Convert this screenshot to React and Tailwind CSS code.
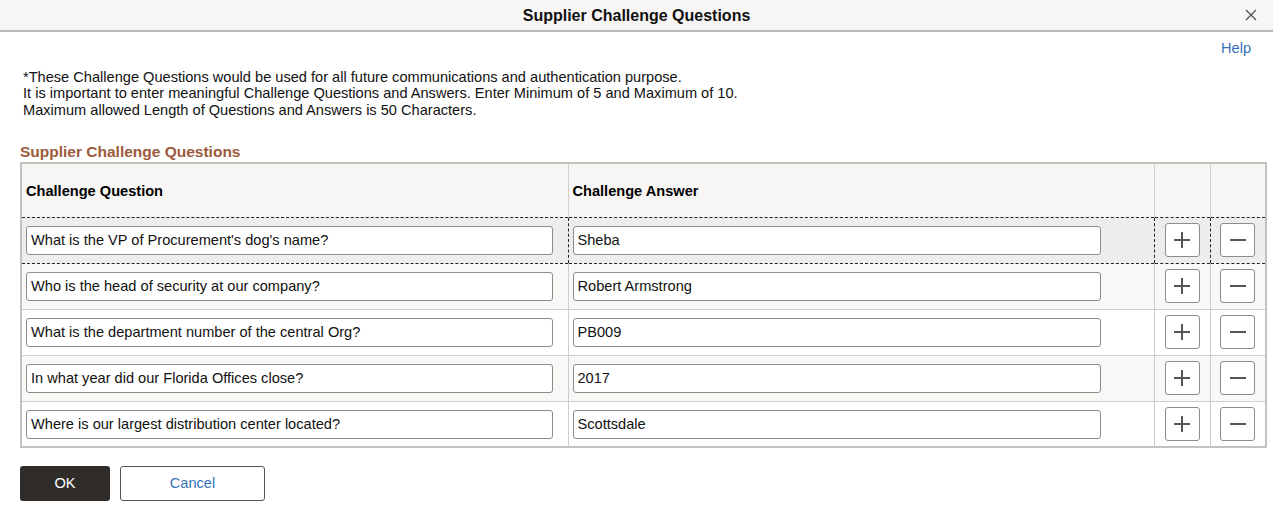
import { useState } from "react";

const initialRows = [
  { q: "What is the VP of Procurement's dog's name?", a: "Sheba" },
  { q: "Who is the head of security at our company?", a: "Robert Armstrong" },
  { q: "What is the department number of the central Org?", a: "PB009" },
  { q: "In what year did our Florida Offices close?", a: "2017" },
  { q: "Where is our largest distribution center located?", a: "Scottsdale" },
];

function PlusIcon() {
  return (
    <svg width="18" height="18" viewBox="0 0 18 18">
      <path d="M9 1v16M1 9h16" stroke="#555" strokeWidth="2" />
    </svg>
  );
}

function MinusIcon() {
  return (
    <svg width="18" height="18" viewBox="0 0 18 18">
      <path d="M1 9h16" stroke="#555" strokeWidth="2" />
    </svg>
  );
}

function App() {
  const [rows, setRows] = useState(initialRows);

  const handleChange = (i, field, value) => {
    const next = rows.map((r, idx) => (idx === i ? { ...r, [field]: value } : r));
    setRows(next);
  };

  return (
    <div className="w-[1273px] h-[508px] bg-white text-[14.6px] text-black font-['Liberation_Sans',Arial,sans-serif]">
      <div className="h-[32px] bg-[#f7f6f5] border-b-2 border-[#b8b8b8] flex items-center justify-center relative pt-[2px]">
        <h1 className="text-[16px] font-bold text-[#111]">Supplier Challenge Questions</h1>
        <button className="absolute right-[16px] top-[9px] text-[#555]">
          <svg width="12" height="12" viewBox="0 0 12 12">
            <path d="M1 1l10 10M11 1L1 11" stroke="#555" strokeWidth="1.4" />
          </svg>
        </button>
      </div>

      <div className="flex justify-end pr-[22px] pt-[6px]">
        <a className="text-[14.6px] text-[#3572b9]">Help</a>
      </div>

      <div className="pl-[23px] pt-[9px] leading-[16.5px] text-[#111]">
        <p>*These Challenge Questions would be used for all future communications and authentication purpose.</p>
        <p>It is important to enter meaningful Challenge Questions and Answers. Enter Minimum of 5 and Maximum of 10.</p>
        <p>Maximum allowed Length of Questions and Answers is 50 Characters.</p>
      </div>

      <div className="px-[20px] pt-[25px]">
        <h2 className="text-[15.5px] font-bold text-[#9b5a3c] leading-[18px] mb-[1px]">Supplier Challenge Questions</h2>
        <table className="w-[1247px] border-collapse border-2 border-[#c5c2be] table-fixed">
          <colgroup>
            <col className="w-[547px]" />
            <col className="w-[586px]" />
            <col className="w-[56px]" />
            <col className="w-[56px]" />
          </colgroup>
          <thead>
            <tr className="h-[54px] bg-[#f7f6f5]">
              <th className="text-left font-bold pl-[4px] pt-[2px] border border-b-0 border-[#d0cdca]">Challenge Question</th>
              <th className="text-left font-bold pl-[4px] pt-[2px] border border-b-0 border-[#d0cdca]">Challenge Answer</th>
              <th className="border border-b-0 border-[#d0cdca]"></th>
              <th className="border border-b-0 border-[#d0cdca]"></th>
            </tr>
          </thead>
          <tbody>
            {rows.map((row, i) => {
              const sel = i === 0;
              const bg = sel ? "bg-[#ededed]" : i % 2 === 1 ? "bg-[#f9f8f7]" : "bg-white";
              const cell = sel
                ? "border border-dashed border-[#222] px-[4px]"
                : i === 1
                  ? "border border-t-0 border-[#d0cdca] px-[4px]"
                  : "border border-[#d0cdca] px-[4px]";
              return (
                <tr key={i} className={`h-[46px] ${bg}`}>
                  <td className={cell}>
                    <input
                      value={row.q}
                      onChange={(e) => handleChange(i, "q", e.target.value)}
                      className="w-[527px] h-[29px] bg-white border border-[#8f8b87] rounded-[3px] px-[4px] text-[14.6px] text-[#111] outline-none"
                    />
                  </td>
                  <td className={cell}>
                    <input
                      value={row.a}
                      onChange={(e) => handleChange(i, "a", e.target.value)}
                      className="w-[528px] h-[29px] bg-white border border-[#8f8b87] rounded-[3px] px-[4px] text-[14.6px] text-[#111] outline-none"
                    />
                  </td>
                  <td className={`${cell} text-center`}>
                    <button className="w-[35px] h-[34px] inline-flex items-center justify-center bg-white border border-[#8f8b87] rounded-[3px]">
                      <PlusIcon />
                    </button>
                  </td>
                  <td className={`${cell} text-center`}>
                    <button className="w-[35px] h-[34px] inline-flex items-center justify-center bg-white border border-[#8f8b87] rounded-[3px]">
                      <MinusIcon />
                    </button>
                  </td>
                </tr>
              );
            })}
          </tbody>
        </table>

        <div className="flex gap-[10px] pt-[18px]">
          <button className="w-[90px] h-[35px] bg-[#2f2c2a] text-white rounded-[3px] text-[14.6px]">OK</button>
          <button className="w-[145px] h-[35px] bg-white border border-[#555] rounded-[3px] text-[14.6px] text-[#3572b9]">Cancel</button>
        </div>
      </div>
    </div>
  );
}

export default App;
